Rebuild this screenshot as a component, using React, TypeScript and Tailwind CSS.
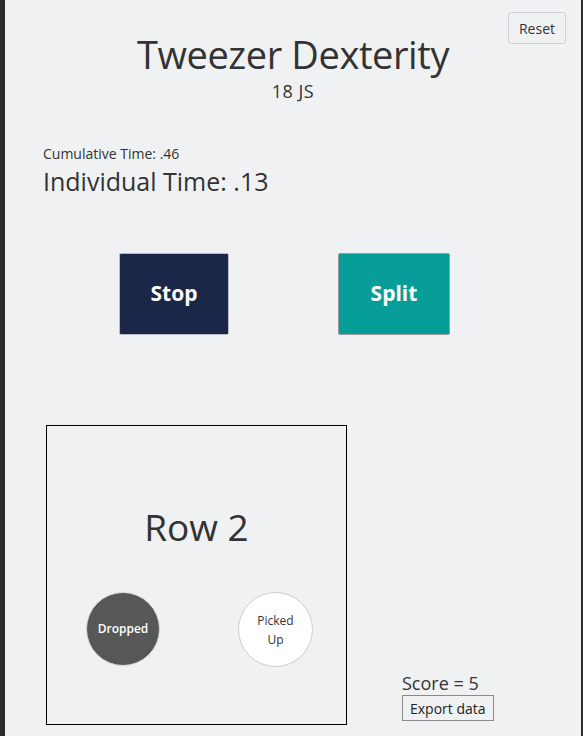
import React from "react";

const font = { fontFamily: '"Open Sans", "Noto Sans", sans-serif' };

function Circle({
  label,
  dark,
}: {
  label: React.ReactNode;
  dark?: boolean;
}) {
  return (
    <div
      className={
        dark
          ? "w-[74px] h-[74px] rounded-full bg-[#575757] border border-[#d8d8d8] flex items-center justify-center text-white text-[12px] font-semibold"
          : "w-[75px] h-[75px] rounded-full bg-white border border-[#cccccc] flex items-center justify-center text-[#333] text-[12px] text-center leading-[19px]"
      }
    >
      {label}
    </div>
  );
}

export default function App() {
  return (
    <div className="flex min-h-[736px] bg-[#2b2b2b]" style={font}>
      <div className="relative ml-[5px] w-[576px] h-[736px] overflow-hidden bg-[#f0f1f3] text-[#333]">
        {/* Reset */}
        <button className="absolute top-[12px] right-[15px] h-[32px] px-[10px] rounded-[3px] border border-[#cfd1d4] bg-[#f0f1f3] text-[14px] text-[#333]">
          Reset
        </button>

        {/* Header */}
        <div className="pt-[29px] text-center">
          <h1 className="text-[38px] leading-[50px] tracking-[-0.4px]">
            Tweezer Dexterity
          </h1>
          <div className="text-[18px] leading-[24px] tracking-[0.5px]">
            18 JS
          </div>
        </div>

        {/* Times */}
        <div className="pl-[38px] mt-[41px]">
          <div className="text-[14px] leading-[20px]">Cumulative Time: .46</div>
          <div className="text-[25px] leading-[32px] mt-[1px]">
            Individual Time: .13
          </div>
        </div>

        {/* Buttons */}
        <div className="flex pl-[114px] gap-[109px] mt-[56px]">
          <button className="w-[110px] h-[82px] rounded-[2px] border border-[#b8bcc4] bg-[#1a2748] text-white text-[21px] font-bold">
            Stop
          </button>
          <button className="w-[112px] h-[82px] rounded-[2px] border border-[#9a9a9a] bg-[#079e9a] text-white text-[21px] font-bold">
            Split
          </button>
        </div>

        {/* Row box + score */}
        <div className="flex items-end pl-[41px] mt-[90px]">
          <div className="w-[301px] h-[300px] border border-black flex flex-col items-center">
            <div className="text-[37px] leading-[50px] mt-[76px]">Row 2</div>
            <div className="flex w-full justify-between pl-[39px] pr-[33px] mt-[40px]">
              <Circle label="Dropped" dark />
              <Circle
                label={
                  <span>
                    Picked
                    <br />
                    Up
                  </span>
                }
              />
            </div>
          </div>
          <div className="ml-[55px] mb-[4px]">
            <div className="text-[18px] leading-[24px]">Score = 5</div>
            <button className="h-[26px] px-[7px] border border-[#8a8a8a] bg-[#f0f1f3] text-[14px] text-[#222]">
              Export data
            </button>
          </div>
        </div>
      </div>
    </div>
  );
}
